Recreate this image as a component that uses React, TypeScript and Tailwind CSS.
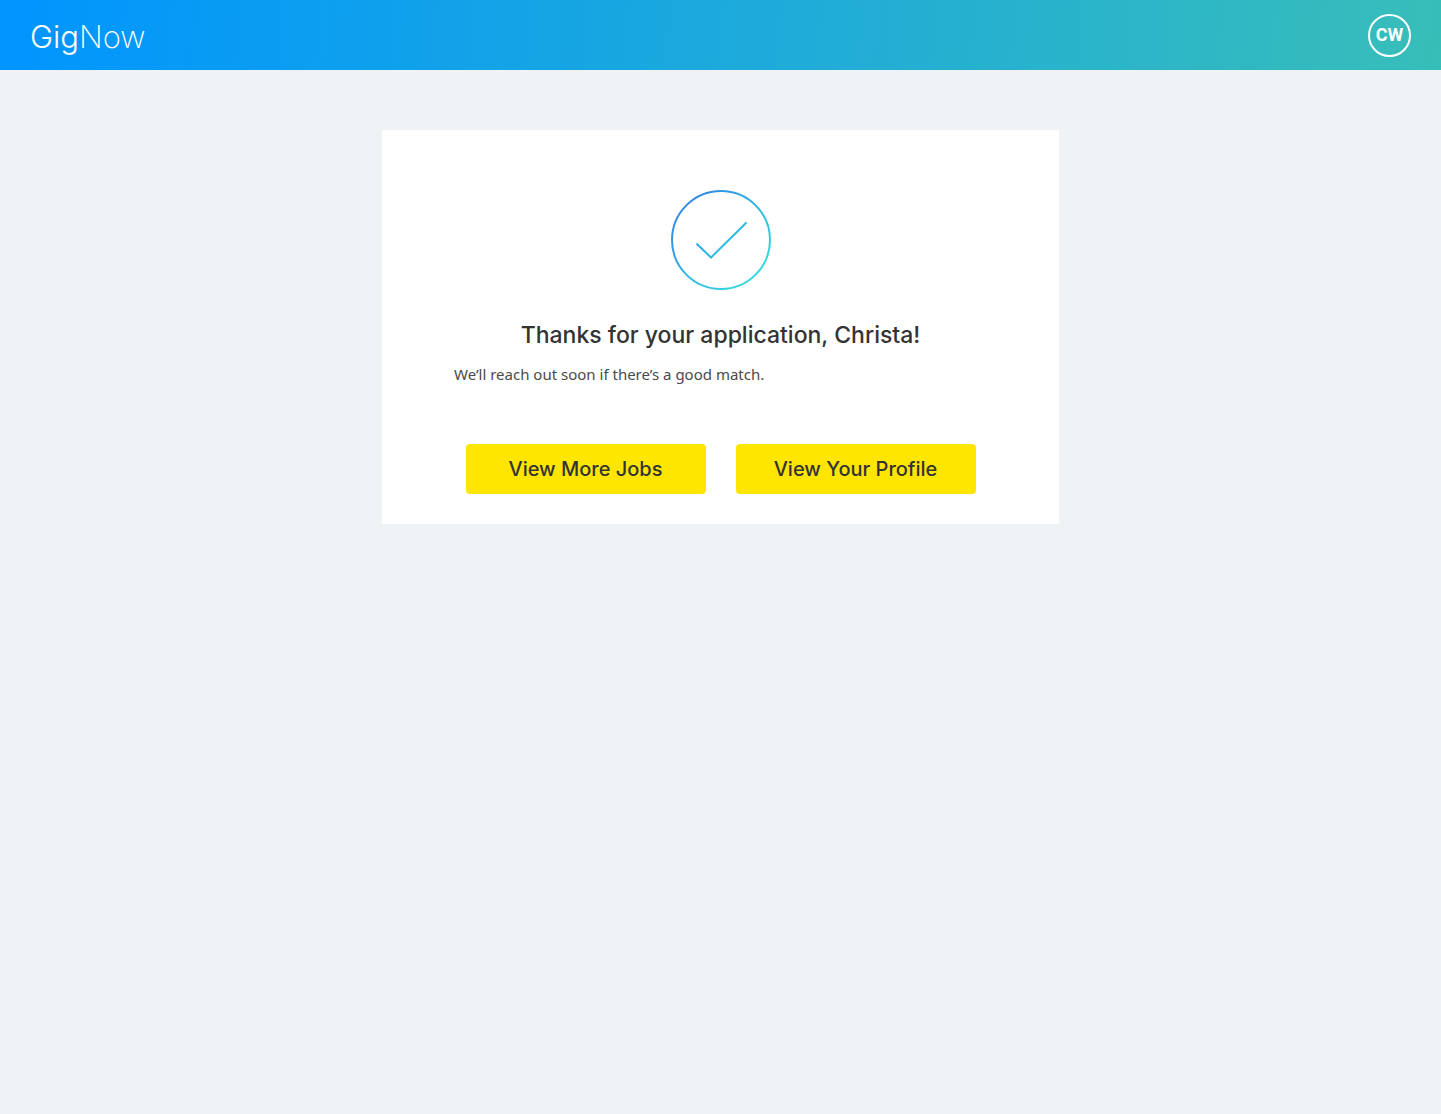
import type { ReactNode } from "react";

function Logo() {
  return (
    <a href="#" aria-label="GigNow home" className="mt-1 flex items-baseline text-[31px] leading-10 text-white">
      <span className="font-light">Gig</span>
      <span className="font-extralight">Now</span>
    </a>
  );
}

function Header() {
  return (
    <header className="flex h-[70px] items-center justify-between bg-[linear-gradient(95deg,#0095ff_0%,#38beb9_100%)] px-[30px]">
      <Logo />
      <button
        type="button"
        aria-label="Account menu"
        className="flex size-[43px] items-center justify-center rounded-full border-2 border-white font-[Roboto,sans-serif] text-lg font-bold text-white"
      >
        CW
      </button>
    </header>
  );
}

function CheckIcon() {
  return (
    <svg width="100" height="100" viewBox="0 0 100 100" fill="none" stroke="url(#check-gradient)" strokeWidth="2" aria-hidden="true">
      <defs>
        <linearGradient id="check-gradient" gradientUnits="userSpaceOnUse" x1="14" y1="14" x2="86" y2="86">
          <stop offset="0" stopColor="#3088e6" />
          <stop offset="0.5" stopColor="#30b5e3" />
          <stop offset="1" stopColor="#34d8e0" />
        </linearGradient>
      </defs>
      <circle cx="50" cy="50" r="49" />
      <path d="M25.5 53.5 40 67.5 75.5 32.5" />
    </svg>
  );
}

function ActionButton({ children }: { children: ReactNode }) {
  return (
    <button type="button" className="h-[50px] w-60 rounded bg-[#ffe600] text-xl font-medium text-[#333]">
      {children}
    </button>
  );
}

export default function App() {
  return (
    <div className="min-h-screen bg-[#eff3f6] font-[Inter,sans-serif]">
      <Header />
      <main className="px-4 pt-[60px]">
        <section className="mx-auto flex max-w-[677px] flex-col items-center bg-white px-[72px] pt-[60px] pb-[30px]">
          <CheckIcon />
          <h1 className="mt-[30px] text-center text-[23px] leading-[30px] font-medium text-[#333]">
            Thanks for your application, Christa!
          </h1>
          <p className="mt-3 w-full font-['Noto_Sans',sans-serif] text-[15px] leading-6 text-[#4a4a4a]">
            We’ll reach out soon if there’s a good match.
          </p>
          <div className="mt-[58px] flex flex-wrap justify-center gap-[30px]">
            <ActionButton>View More Jobs</ActionButton>
            <ActionButton>View Your Profile</ActionButton>
          </div>
        </section>
      </main>
    </div>
  );
}
